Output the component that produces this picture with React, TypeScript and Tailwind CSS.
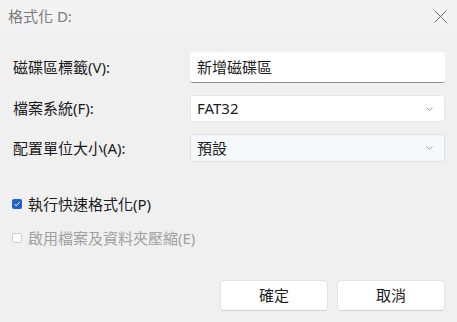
import React from "react";

const font = { fontFamily: '"Noto Sans", "Noto Sans CJK TC", sans-serif' };

const Chevron = () => (
  <svg width="7" height="4" viewBox="0 0 7 4" className="text-[#a0a0a0]">
    <path d="M0.5 0.5 L3.5 3.5 L6.5 0.5" fill="none" stroke="currentColor" strokeWidth="1" />
  </svg>
);

const App = () => {
  return (
    <div
      className="w-[457px] h-[322px] bg-[#f0f0f0] text-[#1b1b1b] text-[15px] flex flex-col overflow-hidden"
      style={font}
    >
      <div className="h-[33px] bg-[#f3f3f3] flex items-center justify-between pl-2 pr-[10px]">
        <span className="text-[#7a7a7a] text-[15px]">格式化 D:</span>
        <svg width="13" height="13" viewBox="0 0 13 13" className="text-[#6b6b6b]">
          <path d="M0.5 0.5 L12.5 12.5 M12.5 0.5 L0.5 12.5" stroke="currentColor" strokeWidth="1" />
        </svg>
      </div>

      <div className="flex flex-col pl-[13px] pr-3 pt-[19px]">
        <div className="flex items-center h-[31px]">
          <span className="w-[177px]">磁碟區標籤(V):</span>
          <div className="w-[255px] h-[31px] bg-white border-b border-[#8c8c8c] rounded-[3px] flex items-center px-[7px]">
            新增磁碟區
          </div>
        </div>
        <div className="flex items-center h-[27px] mt-[12px]">
          <span className="w-[177px]">檔案系統(F):</span>
          <div className="w-[255px] h-[27px] bg-white border border-[#e6e6e6] rounded-[3px] flex items-center justify-between pl-[6px] pr-[11px]">
            <span>FAT32</span>
            <Chevron />
          </div>
        </div>
        <div className="flex items-center h-[28px] mt-[12px]">
          <span className="w-[177px]">配置單位大小(A):</span>
          <div className="w-[255px] h-[28px] bg-[#f6f9fc] border border-[#e0e0e0] rounded-[3px] flex items-center justify-between pl-[6px] pr-[11px]">
            <span>預設</span>
            <Chevron />
          </div>
        </div>

        <div className="flex items-center gap-[6px] mt-[31px] -ml-[1px]">
          <span className="w-[10px] h-[10px] rounded-[2px] bg-[#1f63c8] flex items-center justify-center">
            <svg width="8" height="8" viewBox="0 0 8 8">
              <path d="M1.5 4.2 L3.2 5.8 L6.5 2.2" fill="none" stroke="white" strokeWidth="1" />
            </svg>
          </span>
          <span>執行快速格式化(P)</span>
        </div>
        <div className="flex items-center gap-[6px] mt-[11px] -ml-[1px] text-[#a0a0a0]">
          <span className="w-[10px] h-[10px] rounded-[2px] bg-white border border-[#cfcfcf]" />
          <span>啟用檔案及資料夾壓縮(E)</span>
        </div>

        <div className="flex justify-end gap-[9px] mt-[31px]">
          <button className="w-[108px] h-[31px] bg-white border border-[#e3e3e3] border-b-[#d0d0d0] rounded-[4px] text-[15px]">
            確定
          </button>
          <button className="w-[108px] h-[31px] bg-white border border-[#e3e3e3] border-b-[#d0d0d0] rounded-[4px] text-[15px]">
            取消
          </button>
        </div>
      </div>
    </div>
  );
};

export default App;
